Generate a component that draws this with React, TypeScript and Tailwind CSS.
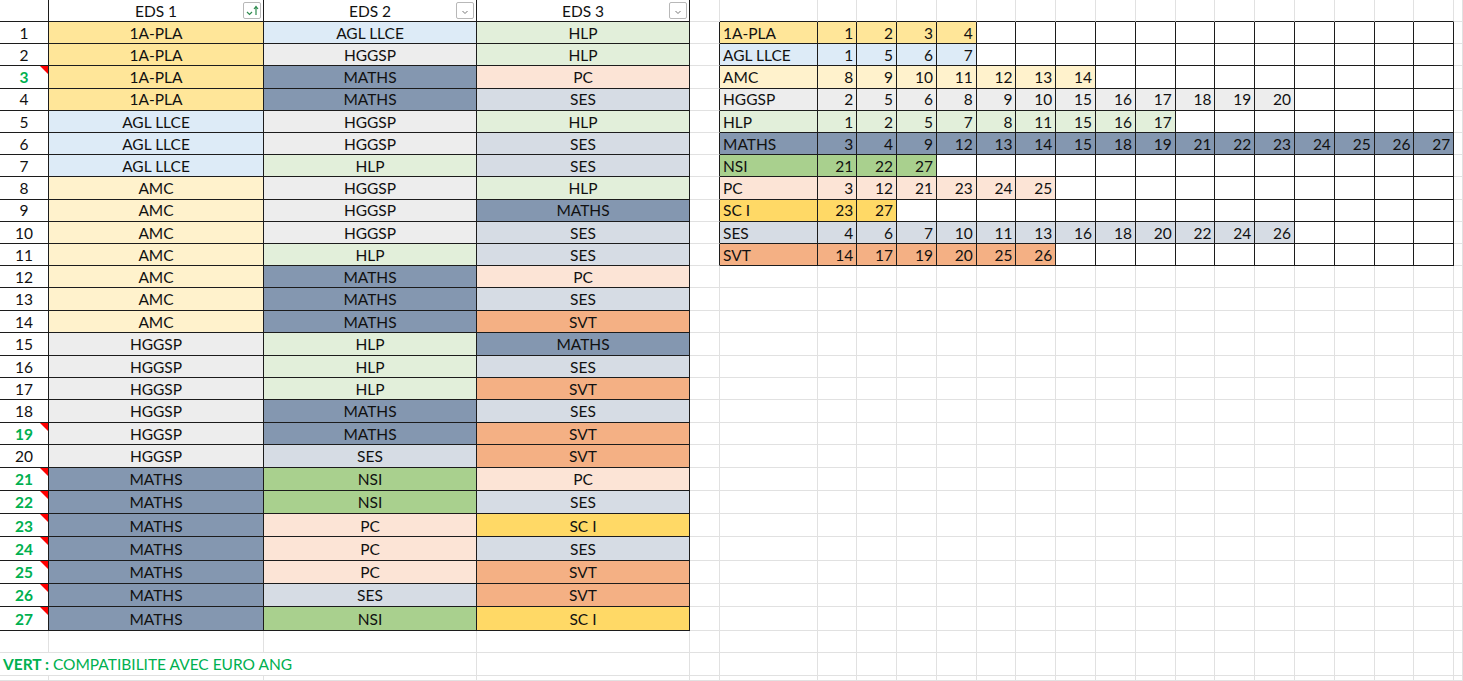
import React from "react";

const FILL: Record<string, string> = {
  "1A-PLA": "bg-[#ffe699]",
  "AGL LLCE": "bg-[#ddebf7]",
  AMC: "bg-[#fff2cc]",
  HGGSP: "bg-[#ededed]",
  HLP: "bg-[#e2efda]",
  MATHS: "bg-[#8497b0]",
  NSI: "bg-[#a9d08e]",
  PC: "bg-[#fce4d6]",
  "SC I": "bg-[#ffd966]",
  SES: "bg-[#d6dce4]",
  SVT: "bg-[#f4b084]",
};

const combos: [string, string, string][] = [
  ["1A-PLA", "AGL LLCE", "HLP"],
  ["1A-PLA", "HGGSP", "HLP"],
  ["1A-PLA", "MATHS", "PC"],
  ["1A-PLA", "MATHS", "SES"],
  ["AGL LLCE", "HGGSP", "HLP"],
  ["AGL LLCE", "HGGSP", "SES"],
  ["AGL LLCE", "HLP", "SES"],
  ["AMC", "HGGSP", "HLP"],
  ["AMC", "HGGSP", "MATHS"],
  ["AMC", "HGGSP", "SES"],
  ["AMC", "HLP", "SES"],
  ["AMC", "MATHS", "PC"],
  ["AMC", "MATHS", "SES"],
  ["AMC", "MATHS", "SVT"],
  ["HGGSP", "HLP", "MATHS"],
  ["HGGSP", "HLP", "SES"],
  ["HGGSP", "HLP", "SVT"],
  ["HGGSP", "MATHS", "SES"],
  ["HGGSP", "MATHS", "SVT"],
  ["HGGSP", "SES", "SVT"],
  ["MATHS", "NSI", "PC"],
  ["MATHS", "NSI", "SES"],
  ["MATHS", "PC", "SC I"],
  ["MATHS", "PC", "SES"],
  ["MATHS", "PC", "SVT"],
  ["MATHS", "SES", "SVT"],
  ["MATHS", "NSI", "SC I"],
];

// rows that are compatible with euro ang (green number + comment marker)
const euro = new Set([3, 19, 21, 22, 23, 24, 25, 26, 27]);

const index: [string, number[]][] = [
  ["1A-PLA", [1, 2, 3, 4]],
  ["AGL LLCE", [1, 5, 6, 7]],
  ["AMC", [8, 9, 10, 11, 12, 13, 14]],
  ["HGGSP", [2, 5, 6, 8, 9, 10, 15, 16, 17, 18, 19, 20]],
  ["HLP", [1, 2, 5, 7, 8, 11, 15, 16, 17]],
  ["MATHS", [3, 4, 9, 12, 13, 14, 15, 18, 19, 21, 22, 23, 24, 25, 26, 27]],
  ["NSI", [21, 22, 27]],
  ["PC", [3, 12, 21, 23, 24, 25]],
  ["SC I", [23, 27]],
  ["SES", [4, 6, 7, 10, 11, 13, 16, 18, 20, 22, 24, 26]],
  ["SVT", [14, 17, 19, 20, 25, 26]],
];

const ROWS = 31;
const COLS = 23;

function FilterButton({ sorted }: { sorted?: boolean }) {
  return (
    <div className="absolute right-[2px] top-[2px] w-[18px] h-[17px] rounded-[2px] border border-[#b8b8b8] bg-white flex items-center justify-center">
      {sorted ? (
        <svg width="16" height="15" viewBox="0 0 16 15">
          <path d="M3 9 L5.5 11.5 L8 9" fill="none" stroke="#2e8b4f" strokeWidth="1.2" />
          <path d="M12 12 V4 M10 6 L12 3.5 L14 6" fill="none" stroke="#2e8b4f" strokeWidth="1.2" />
        </svg>
      ) : (
        <svg width="16" height="15" viewBox="0 0 16 15">
          <path d="M5.5 8 L8 10.5 L10.5 8" fill="none" stroke="#777" strokeWidth="1" />
        </svg>
      )}
    </div>
  );
}

function darkRight(r: number, c: number) {
  if (c <= 3 && r <= 27) return true;
  if (c >= 4 && c <= 21 && r >= 1 && r <= 11) return true;
  return false;
}

function darkBottom(r: number, c: number) {
  if (c <= 3 && r <= 27) return true;
  if (c >= 5 && c <= 21 && r <= 11) return true;
  return false;
}

export default function App() {
  const cells: React.ReactNode[] = [];

  for (let r = 0; r < ROWS; r++) {
    for (let c = 0; c < COLS; c++) {
      if (r === 29 && (c === 1 || c === 2)) continue;

      const edge = [
        "relative flex items-center min-w-0 border-r border-b",
        darkRight(r, c) ? "border-r-[#1c1c1c]" : "border-r-[#e1e1e1]",
        darkBottom(r, c) ? "border-b-[#1c1c1c]" : "border-b-[#e1e1e1]",
      ].join(" ");

      let fill = "";
      let body: React.ReactNode = null;
      let extra = "";

      if (r === 0 && c >= 1 && c <= 3) {
        extra = "justify-center";
        body = (
          <>
            <span>EDS {c}</span>
            <FilterButton sorted={c === 1} />
          </>
        );
      } else if (r >= 1 && r <= 27 && c === 0) {
        const g = euro.has(r);
        extra = "justify-center";
        body = (
          <>
            <span className={g ? "font-bold text-[#00b050]" : ""}>{r}</span>
            {g && (
              <span className="absolute top-0 right-0 w-0 h-0 border-t-[8px] border-t-[#ff0000] border-l-[8px] border-l-transparent" />
            )}
          </>
        );
      } else if (r >= 1 && r <= 27 && c >= 1 && c <= 3) {
        const s = combos[r - 1][c - 1];
        fill = FILL[s];
        extra = "justify-center";
        body = s;
      } else if (r >= 1 && r <= 11 && c === 5) {
        const [s] = index[r - 1];
        fill = FILL[s];
        extra = "pl-[3px]";
        body = s;
      } else if (r >= 1 && r <= 11 && c >= 6 && c <= 21) {
        const [s, nums] = index[r - 1];
        const n = nums[c - 6];
        if (n !== undefined) {
          fill = FILL[s];
          extra = "justify-end pr-[3px]";
          body = n;
        }
      } else if (r === 29 && c === 0) {
        extra = "col-span-3 pl-[3px] whitespace-nowrap text-[#00b050]";
        body = (
          <span>
            <span className="font-bold">VERT :</span> COMPATIBILITE AVEC EURO ANG
          </span>
        );
      }

      cells.push(
        <div key={`${r}-${c}`} className={`${edge} ${fill} ${extra} pt-[2px]`}>
          {body}
        </div>
      );
    }
  }

  return (
    <div className="h-screen w-full overflow-hidden bg-white text-[#111] font-[Lato,sans-serif] text-[15.5px] leading-none">
      <div className="grid h-full grid-cols-[49px_215px_213px_213px_30px_97.5px_repeat(16,39.8px)_1fr] grid-rows-[22px_repeat(11,22.2px)_repeat(9,22.4px)_repeat(7,23.3px)_22px_23.5px_1fr]">
        {cells}
      </div>
    </div>
  );
}
